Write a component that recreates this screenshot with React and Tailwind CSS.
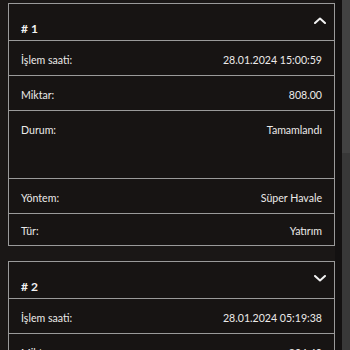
import React from "react";

function Chevron({ up }) {
  return (
    <svg width="12" height="7" viewBox="0 0 12 7" className="mt-[13px]">
      <polyline
        points={up ? "1,6 6,1.5 11,6" : "1,1 6,5.5 11,1"}
        fill="none"
        stroke="#f2f2f2"
        strokeWidth="2"
        strokeLinecap="round"
        strokeLinejoin="round"
      />
    </svg>
  );
}

function Row({ label, value, cls = "h-[35px] items-center pt-[3px]" }) {
  return (
    <div className={"flex justify-between border-t border-[#9a9a9a] px-3 " + cls}>
      <span>{label}</span>
      <span>{value}</span>
    </div>
  );
}

export default function App() {
  return (
    <div className="flex h-[350px] overflow-hidden bg-[#1a1716] font-['Lato',sans-serif] text-[10.6px] leading-[16px] text-[#eceae9]">
      <div className="flex flex-1 flex-col gap-[15px] pl-2 pt-[3px]">
        <div className="flex flex-col border border-[#9a9a9a] bg-[#171413]">
          <div className="flex h-[36px] items-start justify-between pl-3 pr-2">
            <span className="mt-[17px] font-bold text-[12px] text-[#f2f2f2]"># 1</span>
            <Chevron up />
          </div>
          <Row label="İşlem saati:" value="28.01.2024 15:00:59" />
          <Row label="Miktar:" value="808.00" />
          <Row label="Durum:" value="Tamamlandı" cls="h-[68px] items-start pt-[11px]" />
          <Row label="Yöntem:" value="Süper Havale" />
          <Row label="Tür:" value="Yatırım" cls="h-[32px] items-center pt-[3px]" />
        </div>
        <div className="flex flex-col border border-[#9a9a9a] bg-[#171413]">
          <div className="flex h-[36px] items-start justify-between pl-3 pr-2">
            <span className="mt-[17px] font-bold text-[12px] text-[#f2f2f2]"># 2</span>
            <Chevron />
          </div>
          <Row label="İşlem saati:" value="28.01.2024 05:19:38" />
          <Row label="Miktar:" value="804.40" />
          <Row label="Durum:" value="Tamamlandı" cls="h-[68px] items-start pt-[11px]" />
        </div>
      </div>
      <div className="flex w-[15px]">
        <div className="w-[7px] bg-[#131111]" />
        <div className="flex flex-1 flex-col bg-[#383838]">
          <div className="h-[153px] bg-[#424242]" />
        </div>
      </div>
    </div>
  );
}
